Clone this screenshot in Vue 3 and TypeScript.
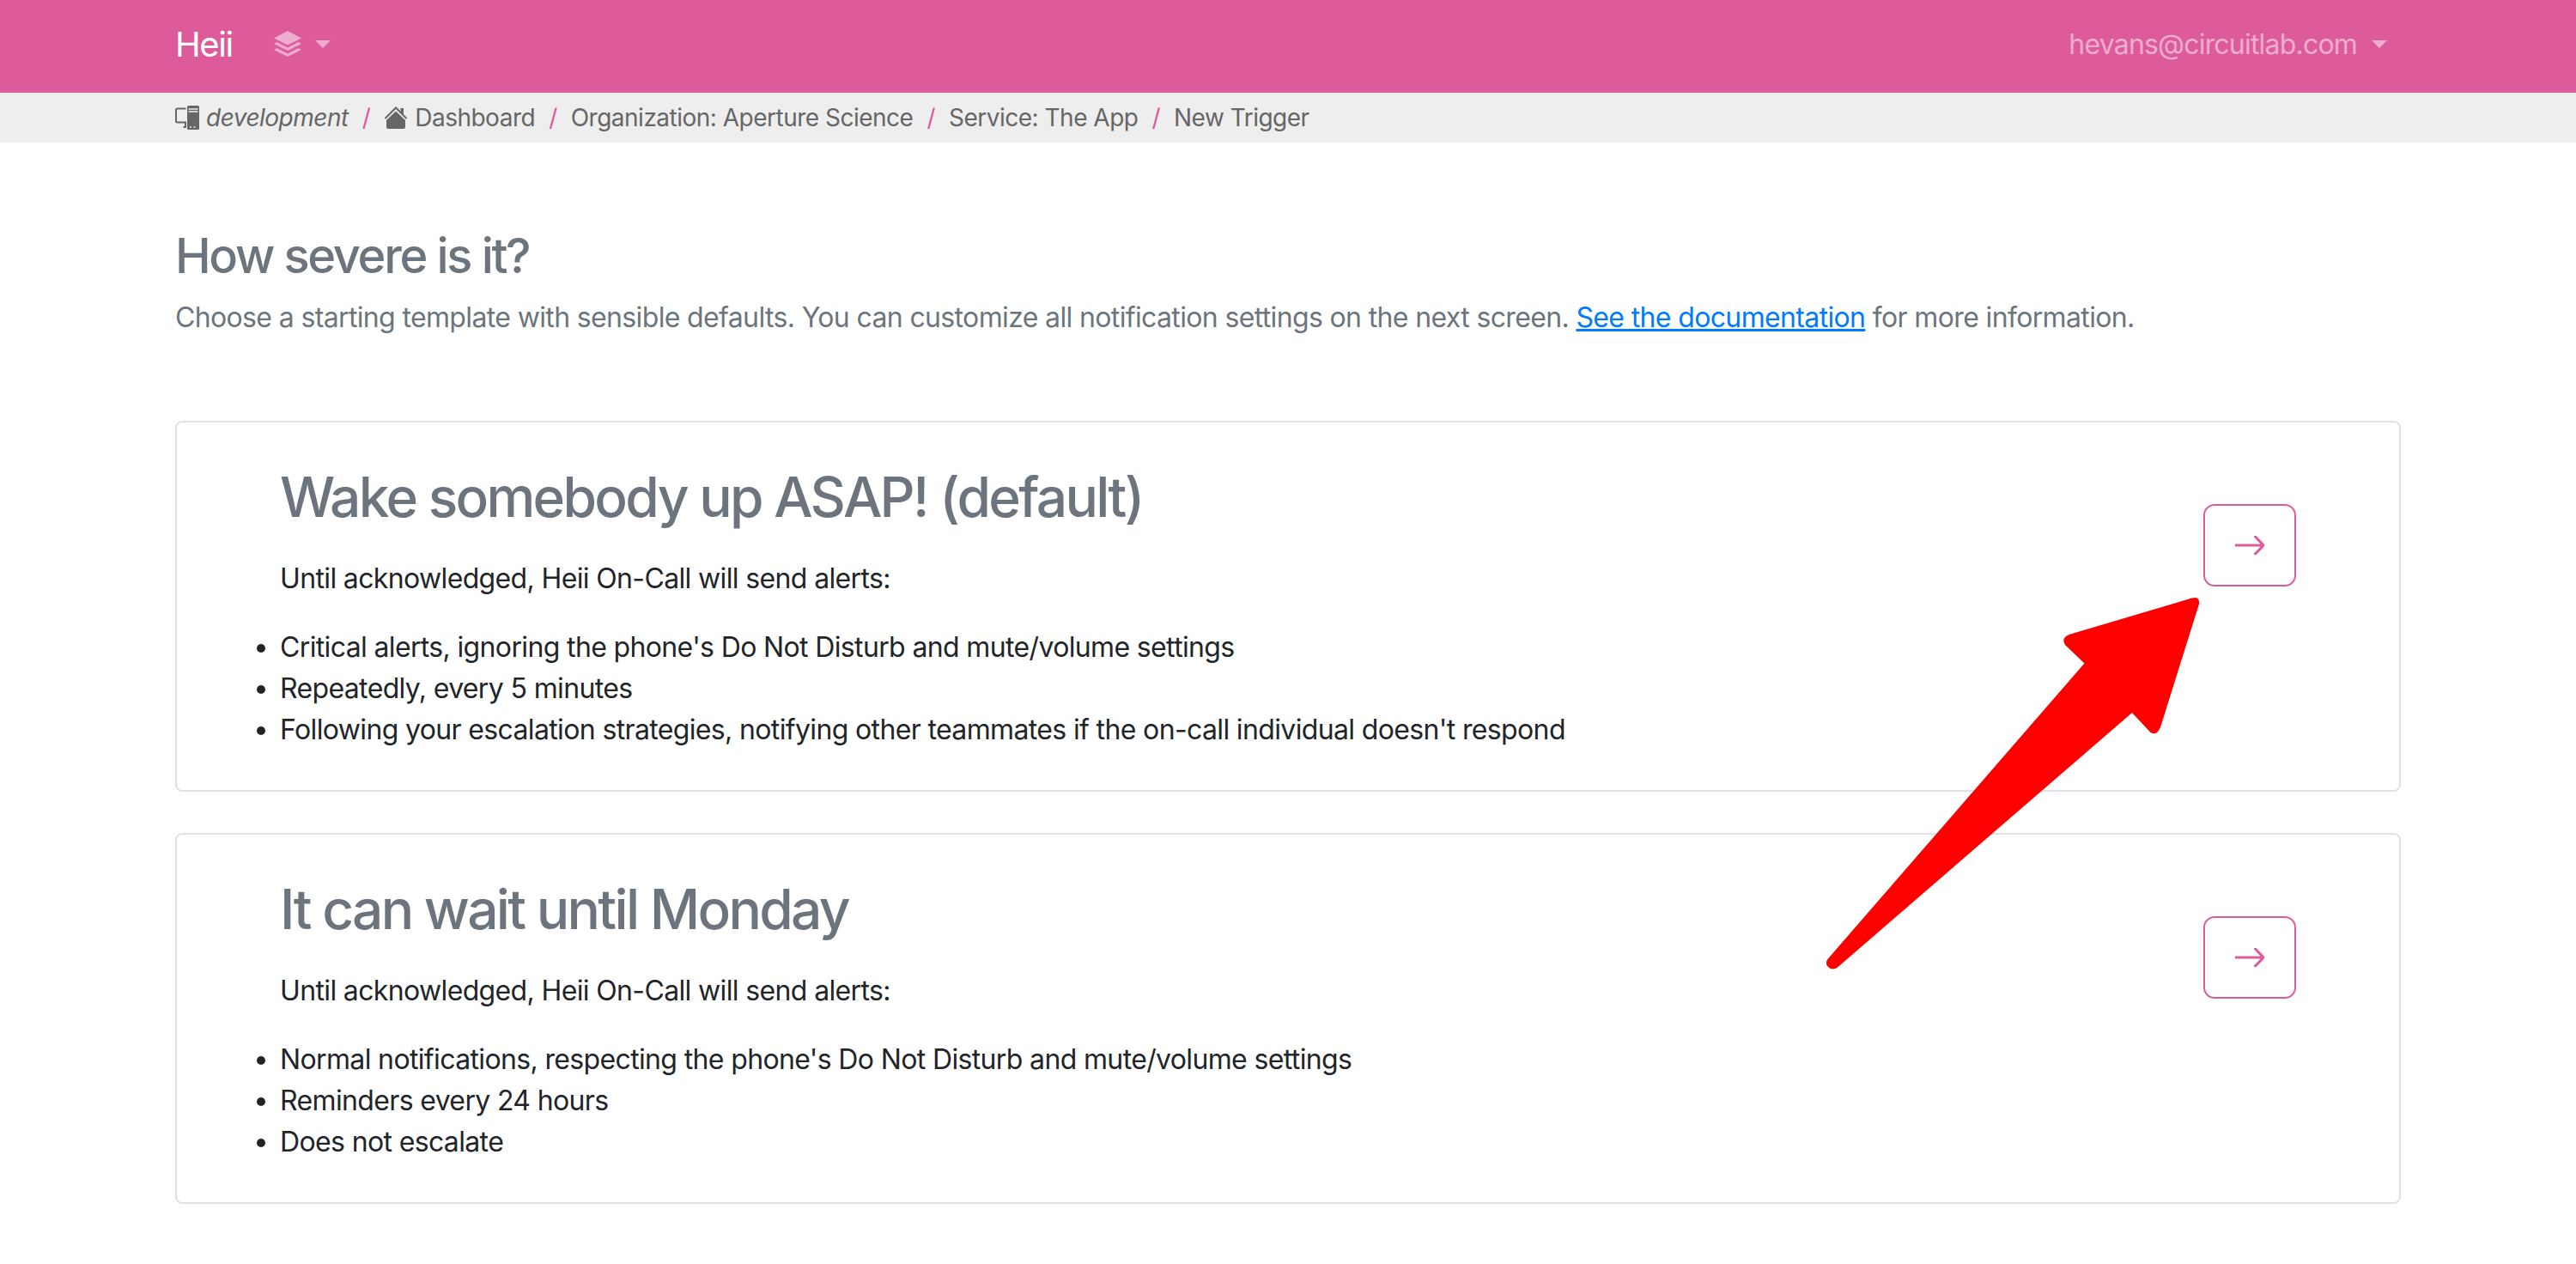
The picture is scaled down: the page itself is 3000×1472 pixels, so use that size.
<script setup lang="ts">
interface Option {
  title: string
  items: string[]
}

const crumbs = ['Organization: Aperture Science', 'Service: The App', 'New Trigger']

const options: Option[] = [
  {
    title: 'Wake somebody up ASAP! (default)',
    items: [
      "Critical alerts, ignoring the phone's Do Not Disturb and mute/volume settings",
      'Repeatedly, every 5 minutes',
      "Following your escalation strategies, notifying other teammates if the on-call individual doesn't respond"
    ]
  },
  {
    title: 'It can wait until Monday',
    items: [
      "Normal notifications, respecting the phone's Do Not Disturb and mute/volume settings",
      'Reminders every 24 hours',
      'Does not escalate'
    ]
  }
]
</script>

<template>
  <div class="page">
    <nav class="navbar">
      <div class="nav-left">
        <span class="brand">Heii</span>
        <span class="nav-menu">
          <svg class="layers" viewBox="0 0 32 30" aria-hidden="true">
            <path d="M16 0 32 8.500 16 16.500 0 8.500Z" />
            <path d="M3.500 13 16 19.500 28.500 13 32 15 16 23 0 15Z" />
            <path d="M3.500 20 16 26.500 28.500 20 32 22 16 30 0 22Z" />
          </svg>
          <i class="caret"></i>
        </span>
      </div>
      <span class="nav-user">hevans@circuitlab.com<i class="caret"></i></span>
    </nav>

    <div class="crumbs">
      <svg class="crumb-icon env" viewBox="0 0 28 28" aria-hidden="true">
        <path class="screen" d="M12.500 3.500H2.500A1.500 1.500 0 0 0 1 5V18a1.500 1.500 0 0 0 1.500 1.500H12V25H9.500" />
        <rect x="14" y="0" width="14" height="28" rx="1.500" />
        <path class="slot" d="M15.500 4H26.500M15.500 7H26.500" />
        <path class="slot" d="M17 25H19M21.500 25H23.500" />
      </svg>
      <em class="crumb">development</em>
      <span class="sep">/</span>
      <svg class="crumb-icon home" viewBox="0 0 28 26" aria-hidden="true">
        <path class="roof" d="M1.500 14 14 1.500 26.500 14" />
        <path d="M14 5.500 25 16V24a2 2 0 0 1-2 2H5a2 2 0 0 1-2-2V16Z" />
        <path d="M19.500 2H23V9.500L19.500 6Z" />
      </svg>
      <span class="crumb">Dashboard</span>
      <template v-for="crumb in crumbs" :key="crumb">
        <span class="sep">/</span>
        <span class="crumb">{{ crumb }}</span>
      </template>
    </div>

    <main class="content">
      <h3 class="heading">How severe is it?</h3>
      <p class="lead">
        Choose a starting template with sensible defaults. You can customize all notification settings on the next screen.
        <a class="doc-link">See the documentation</a> for more information.
      </p>

      <section v-for="option in options" :key="option.title" class="card">
        <div class="card-body">
          <h2 class="card-title">{{ option.title }}</h2>
          <p class="card-intro">Until acknowledged, Heii On-Call will send alerts:</p>
          <ul class="card-list">
            <li v-for="item in option.items" :key="item">{{ item }}</li>
          </ul>
        </div>
        <button class="go" type="button" aria-label="Choose">
          <svg viewBox="0 0 34 22" aria-hidden="true">
            <path d="M1 11H33M23.500 1 33 11 23.500 21" />
          </svg>
        </button>
      </section>
    </main>

    <!-- annotation drawn on top of the screenshot -->
    <svg class="annotation" viewBox="0 0 3000 1472" aria-hidden="true">
      <path
        d="M2552.600 696.600Q2562 694 2561 703.500L2516 847Q2510 860 2501.700 850L2483 830L2140.600 1126Q2133 1132 2127.500 1124Q2126 1120 2128.500 1117L2427.500 772.400L2405 751Q2400 743 2409.600 739Z"
      />
    </svg>
  </div>
</template>

<style>
html,
body {
  margin: 0;
  background: #fff;
}
</style>

<style scoped>
.page {
  position: relative;
  width: 3000px;
  height: 1472px;
  overflow: hidden;
  font-family: Inter, "Liberation Sans", sans-serif;
  font-size: 32px;
  line-height: 48px;
  letter-spacing: -0.02em;
  color: #212529;
}

.navbar {
  height: 108px;
  box-sizing: border-box;
  padding: 0 204px 4px;
  display: flex;
  align-items: center;
  justify-content: space-between;
  background: #dd5b9b;
}

.nav-left {
  display: flex;
  align-items: center;
}

.brand {
  font-size: 40px;
  letter-spacing: -0.035em;
  color: #fff;
  margin-right: 48px;
}

.nav-menu {
  display: flex;
  align-items: center;
}

.layers {
  width: 32px;
  height: 30px;
  margin-bottom: 2px;
  fill: rgba(255, 255, 255, 0.5);
}

.caret {
  display: inline-block;
  margin-left: 16px;
  margin-bottom: 2px;
  border-top: 9px solid rgba(255, 255, 255, 0.5);
  border-left: 9px solid transparent;
  border-right: 9px solid transparent;
}

.nav-user {
  display: flex;
  align-items: center;
  letter-spacing: -0.025em;
  color: rgba(255, 255, 255, 0.5);
  margin-right: 16px;
}

.nav-user .caret {
  margin-left: 17px;
}

.crumbs {
  height: 58px;
  box-sizing: border-box;
  padding: 0 204px;
  display: flex;
  align-items: center;
  background: #eee;
  font-size: 28px;
  letter-spacing: -0.018em;
  color: #666;
}

.crumb-icon {
  fill: #666;
  flex: none;
}

.env {
  width: 28px;
  height: 28px;
  margin-right: 8px;
}

.env .screen,
.home .roof {
  fill: none;
  stroke: #666;
  stroke-width: 2;
}

.env .slot {
  fill: none;
  stroke: #eee;
  stroke-width: 1.5;
}

.home {
  width: 28px;
  height: 26px;
  margin-right: 8px;
}

.sep {
  margin: 0 16px;
  color: #dd5b9b;
}

.content {
  padding: 0 204px;
}

.heading {
  margin: 0;
  padding-top: 98px;
  font-size: 56px;
  line-height: 68px;
  font-weight: 500;
  letter-spacing: -0.042em;
  color: #6c757d;
}

.lead {
  margin: 14px 0 0;
  color: #6c757d;
}

.doc-link {
  color: #007bff;
  text-decoration: underline;
}

.card {
  display: flex;
  justify-content: space-between;
  align-items: flex-start;
  box-sizing: border-box;
  height: 432px;
  margin-top: 48px;
  border: 2px solid #dee2e6;
  border-radius: 8px;
  padding: 0 120px;
  background: #fff;
}

.lead + .card {
  margin-top: 96px;
}

.card-title {
  margin: 0;
  padding-top: 49px;
  font-size: 64px;
  line-height: 76px;
  font-weight: 500;
  letter-spacing: -0.042em;
  color: #6c757d;
}

.card-intro {
  margin: 33px 0 0;
}

.card-list {
  margin: 32px 0 0;
  padding: 0;
}

.go {
  flex: none;
  width: 108px;
  height: 96px;
  margin-top: 95px;
  padding: 0;
  display: flex;
  align-items: center;
  justify-content: center;
  background: #fff;
  border: 2px solid #dd5b9b;
  border-radius: 13px;
}

.go svg {
  width: 34px;
  height: 22px;
  fill: none;
  stroke: #dd5b9b;
  stroke-width: 3;
  stroke-linecap: round;
  stroke-linejoin: round;
}

.annotation {
  position: absolute;
  inset: 0;
  width: 3000px;
  height: 1472px;
  fill: #f00;
  pointer-events: none;
}
</style>
